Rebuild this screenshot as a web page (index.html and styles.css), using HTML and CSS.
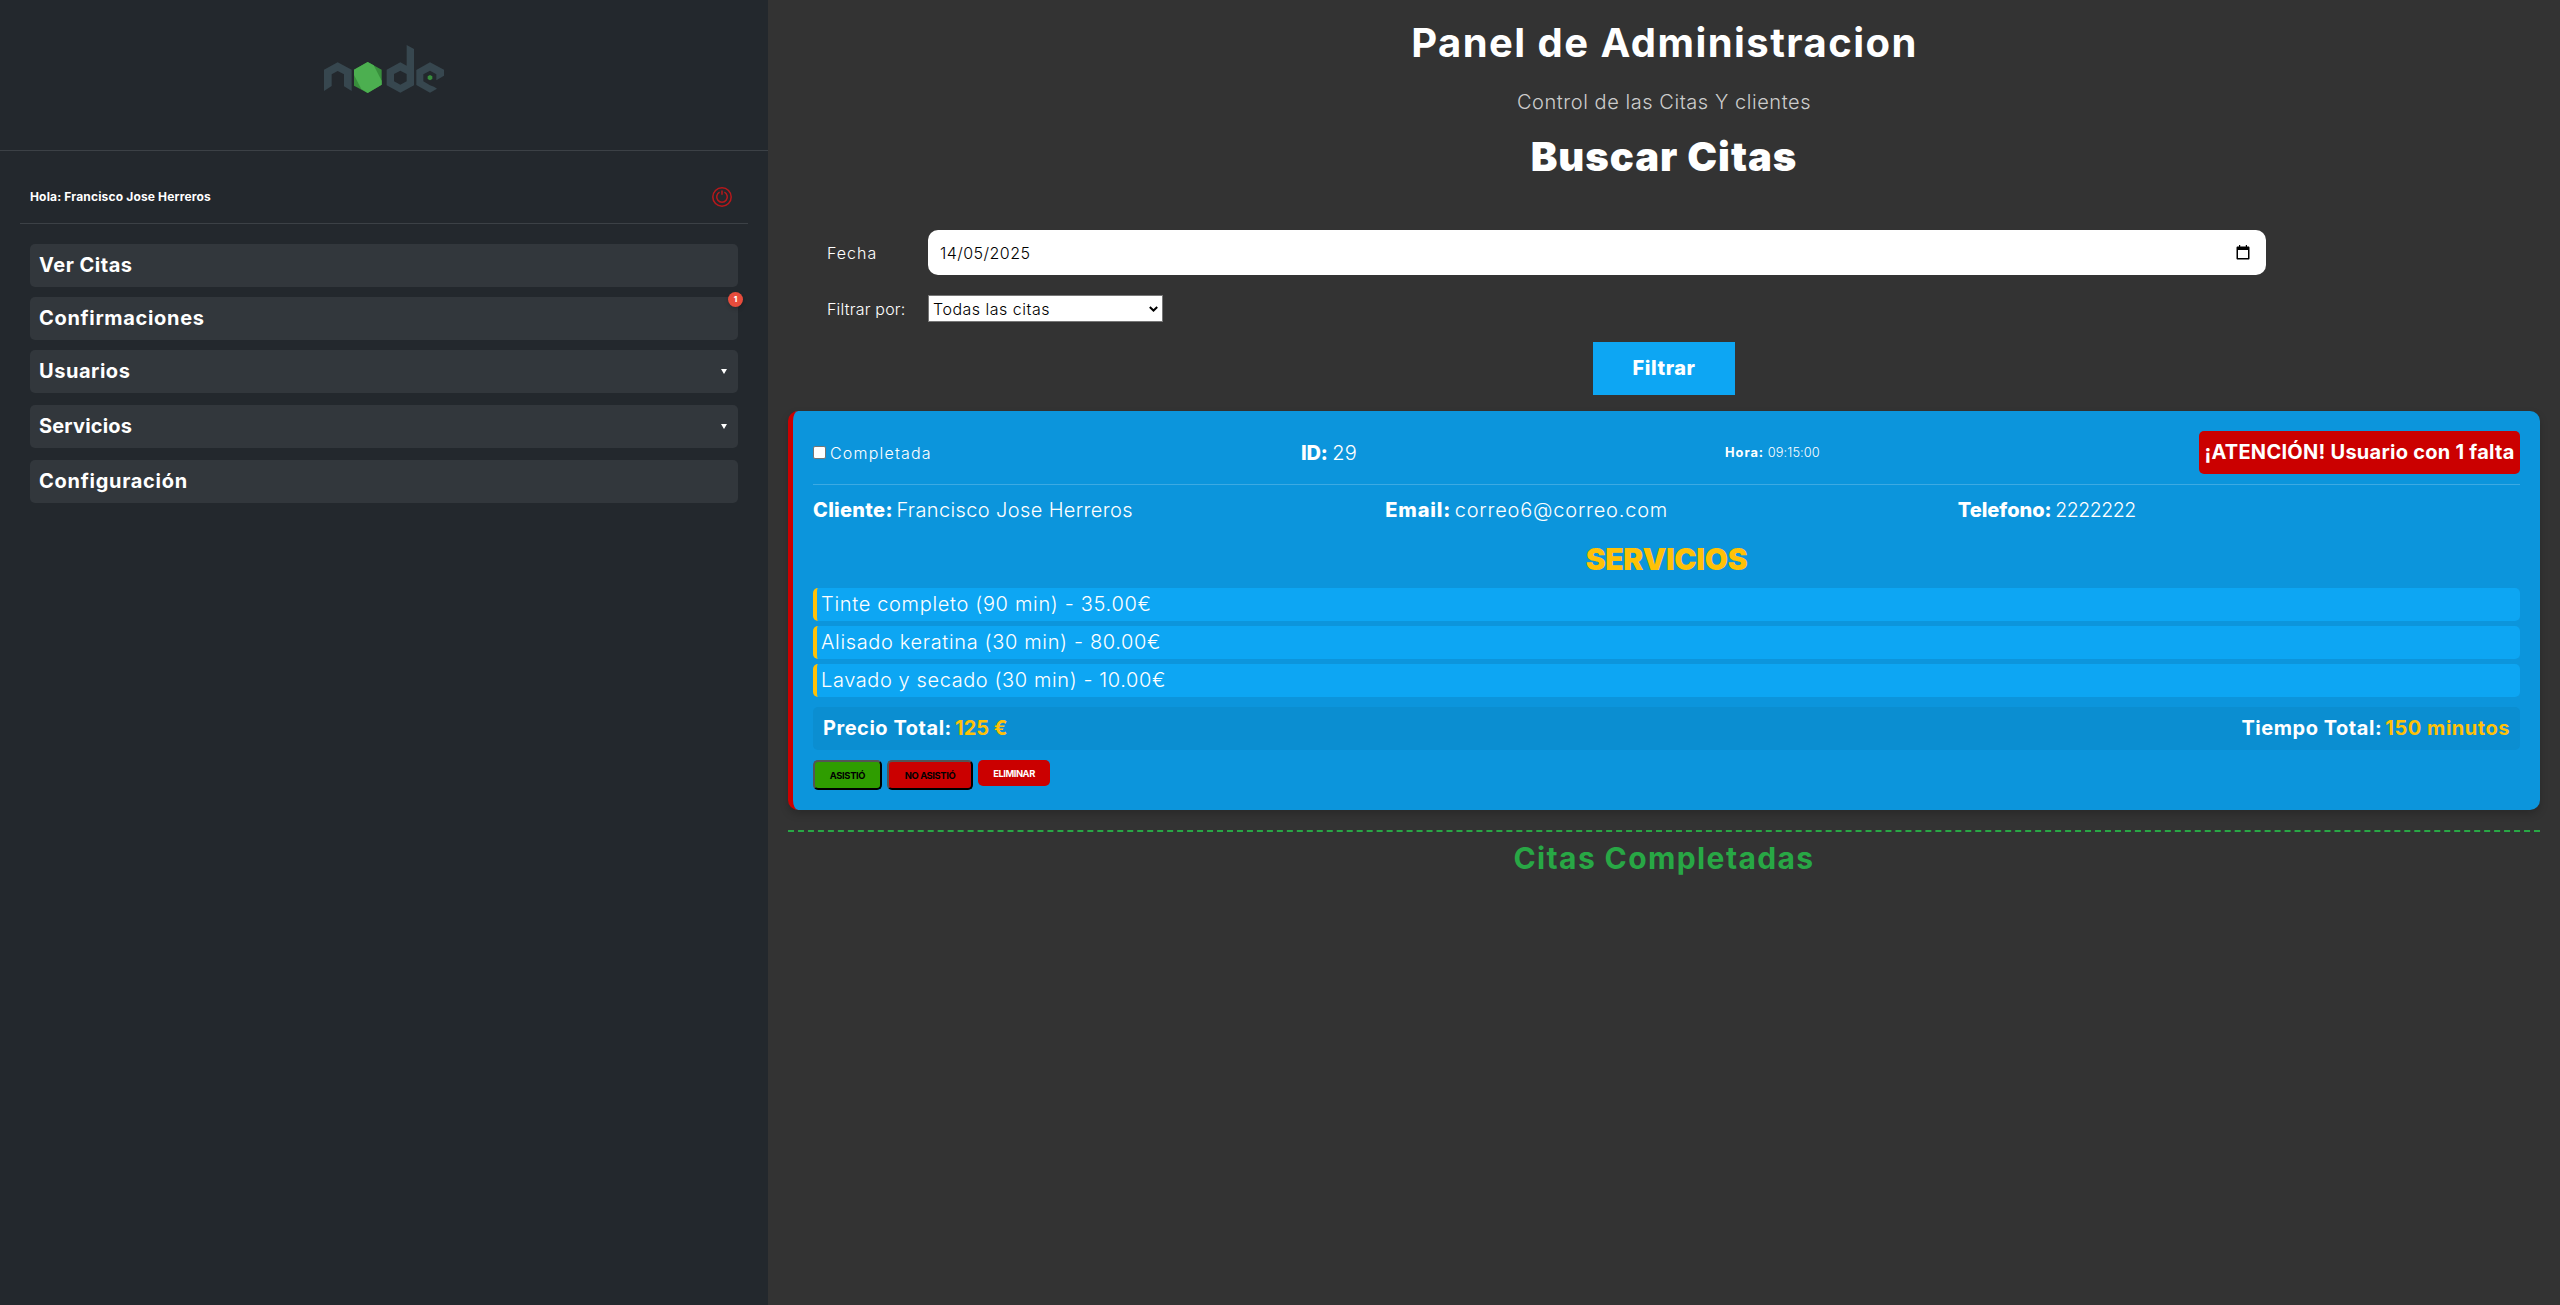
FILE: index.html
```html
<!DOCTYPE html>
<html lang="es">
<head>
<meta charset="utf-8">
<title>Panel de Administracion</title>
<link rel="stylesheet" href="styles.css">
</head>
<body>
<div class="layout">
  <aside class="sidebar">
    <header class="brand">
      <svg class="logo" viewBox="0 0 360 144" width="120" height="48" aria-label="node">
        <g fill="#37474f">
          <path d="M0 74 41 52 83 74V138L60 124V88L41 78 23 88V123L0 138Z"/>
          <path fill-rule="evenodd" d="M248 0 270 12V121L229 143 188 121V74L229 52 248 62ZM229 77 210 87V109L229 119 248 109V87Z"/>
          <path d="M318 52 360 74V92L337 106V88L318 77 298 88V109L318 121 330 125 339 131 318 143 277 120V75Z"/>
        </g>
        <path fill="#388e3c" d="M131 51 173 74V119L131 144 90 122V74Z"/>
        <path fill="#4caf50" d="M131 51 149 61 173 107V119L131 144 112 132 90 90V74Z"/>
        <path fill="#388e3c" d="M318 90 325 94V102L318 106 311 102V94Z"/>
      </svg>
    </header>
    <div class="user-bar">
      <p class="greeting">Hola: Francisco Jose Herreros</p>
      <svg class="power" viewBox="0 0 20 20" width="20" height="20" fill="none" stroke="#b8181b">
        <circle cx="10" cy="10" r="9.2" stroke-width="1.5"/>
        <path d="M7.6 5.2a5.3 5.3 0 1 0 4.8 0M10 3.4V7.8" stroke-width="1.5"/>
      </svg>
    </div>
    <nav class="menu">
      <a class="item"><span class="t-ver">Ver Citas</span></a>
      <a class="item"><span class="t-conf">Confirmaciones</span><b class="badge">1</b></a>
      <a class="item parent"><span class="t-usu">Usuarios</span><i class="caret"></i></a>
      <a class="item parent"><span class="t-serv">Servicios</span><i class="caret"></i></a>
      <a class="item"><span class="t-config">Configuración</span></a>
    </nav>
  </aside>
  <main class="main">
    <h1 class="page-title">Panel de Administracion</h1>
    <p class="page-sub">Control de las Citas Y clientes</p>
    <h2 class="search-title">Buscar Citas</h2>
    <form class="search">
      <div class="field date-field">
        <label class="label t-fecha">Fecha</label>
        <div class="date-input"><span class="t-date">14/05/2025</span>
          <svg viewBox="0 0 14 15" width="14" height="15"><path fill-rule="evenodd" d="M3 0h1.2v1.4h5.6V0H11v1.4h1.3c.7 0 1.2.5 1.2 1.2v10.8c0 .7-.5 1.1-1.2 1.1H1.700c-.7 0-1.200-.4-1.200-1.100V2.600c0-.7.5-1.200 1.200-1.200H3ZM2 5v8h10V5Z"/></svg>
        </div>
      </div>
      <div class="field">
        <label class="label t-filtrar">Filtrar por:</label>
        <div class="select"><span class="t-todas">Todas las citas</span>
          <svg viewBox="0 0 9 6" width="9" height="6" fill="none" stroke="#000" stroke-width="2"><path d="M.8 1 4.500 4.500 8.200 1"/></svg>
        </div>
      </div>
      <button class="submit" type="button">Filtrar</button>
    </form>
    <section class="card">
      <div class="card-head">
        <label class="check"><i class="box"></i><span class="t-comp">Completada</span></label>
        <p class="id"><b>ID:</b> <span class="t-29">29</span></p>
        <p class="hour"><b>Hora:</b> <span class="t-time">09:15:00</span></p>
        <p class="alert">¡ATENCIÓN! Usuario con 1 falta</p>
      </div>
      <div class="client">
        <p><b class="t-cli">Cliente:</b> <span class="t-name">Francisco Jose Herreros</span></p>
        <p><b class="t-email">Email:</b> <span class="t-mail">correo6@correo.com</span></p>
        <p><b class="t-tel">Telefono:</b> <span class="t-num">2222222</span></p>
      </div>
      <h3 class="services-title">SERVICIOS</h3>
      <ul class="services">
        <li class="t-s1">Tinte completo (90 min) - 35.00€</li>
        <li class="t-s2">Alisado keratina (30 min) - 80.00€</li>
        <li class="t-s3">Lavado y secado (30 min) - 10.00€</li>
      </ul>
      <div class="totals">
        <p>Precio Total: <span class="t-price">125 €</span></p>
        <p>Tiempo Total: <span class="t-mins">150 minutos</span></p>
      </div>
      <div class="actions">
        <button class="btn yes" type="button">ASISTIÓ</button>
        <button class="btn no" type="button">NO ASISTIÓ</button>
        <button class="btn del" type="button">ELIMINAR</button>
      </div>
    </section>
    <h3 class="done-title">Citas Completadas</h3>
  </main>
</div>
</body>
</html>
```
FILE: styles.css
```css
* { box-sizing: border-box; margin: 0; padding: 0; }
body { background: #333; color: #fff; font-family: Inter, sans-serif; font-size: 20px; font-weight: 300; white-space: nowrap; }
b { font-weight: 800; }
button { font-family: inherit; }
.layout { display: grid; grid-template-columns: 768px 1fr; height: 1305px; }

/* Sidebar */
.sidebar { background: #23282d; }
.brand { height: 151px; border-bottom: 1px solid #3c4146; display: flex; justify-content: center; padding-top: 45px; }
.logo { display: block; }
.user-bar { margin: 20px 20px 0; height: 53px; padding: 0 16px 0 10px; border-bottom: 1px solid #3c4146; display: flex; align-items: center; justify-content: space-between; }
.greeting { padding-bottom: 2px; font-size: 12px; font-weight: 700; letter-spacing: .16px; }
.menu { display: flex; flex-direction: column; gap: 10px; padding: 20px 30px; }
.item { position: relative; height: 43px; padding: 0 11px 0 9px; border-radius: 5px; background: #32373c; display: flex; align-items: center; justify-content: space-between; font-weight: 700; line-height: 42px; }
.item > span { padding-bottom: 1px; }
.parent { margin-bottom: 2px; }
.caret { border: 3.500px solid transparent; border-top: 5px solid #fff; border-bottom: 0; }
.badge { position: absolute; top: -5px; right: -5px; width: 15px; height: 15px; border-radius: 50%; background: #e74c3c; box-shadow: 0 2px 4px rgba(0, 0, 0, .2); font-size: 8px; line-height: 15px; text-align: center; }
.t-ver { letter-spacing: .5px; }
.t-conf { letter-spacing: .67px; }
.t-usu { letter-spacing: .54px; }
.t-serv { letter-spacing: .17px; }
.t-config { letter-spacing: .72px; }

/* Headings */
.main { padding: 13px 20px 0; }
.page-title, .search-title { font-size: 40px; line-height: 59px; padding-bottom: 1px; text-align: center; }
.page-title { padding-left: 1px; font-weight: 700; letter-spacing: 1.45px; }
.page-sub { margin: 11px 0 7px; line-height: 36px; text-align: center; color: #ccc; letter-spacing: .56px; }
.search-title { font-weight: 900; letter-spacing: .95px; }

/* Search form */
.search { margin-top: 43px; display: flex; flex-direction: column; gap: 20px; }
.field { display: flex; align-items: center; height: 27px; padding-left: 39px; font-size: 16px; font-weight: 300; }
.date-field { height: 45px; }
.label { width: 101px; }
.date-input { width: 1338px; height: 45px; padding: 0 16px 0 12px; border-radius: 10px; background: #fff; color: #000; display: flex; align-items: center; justify-content: space-between; }
.select { width: 235px; height: 27px; padding: 0 4px; border: 1px solid #767676; background: #fff; color: #000; display: flex; align-items: center; justify-content: space-between; }
.t-fecha { letter-spacing: 1px; }
.t-filtrar { letter-spacing: .2px; }
.t-date { letter-spacing: .45px; }
.t-todas { letter-spacing: .5px; }
.submit { align-self: center; width: 142px; height: 53px; padding-bottom: 1px; border: 0; background: #0da6f3; color: #fff; font-size: 20px; font-weight: 800; letter-spacing: .52px; }

/* Appointment card */
.card { margin-top: 16px; height: 399px; padding: 20px; border-left: 5px solid #cb0000; border-radius: 10px; background: #0c95dc; box-shadow: 0 4px 8px rgba(0, 0, 0, .2); }
.card-head { height: 54px; padding-bottom: 10px; border-bottom: 1px solid #3daae3; display: grid; grid-template-columns: 488px 424px 1fr auto; align-items: center; }
.check { display: flex; align-items: center; gap: 4px; font-size: 16px; }
.box { width: 13px; height: 13px; border: 1px solid #767676; border-radius: 2px; background: #fff; }
.t-comp { letter-spacing: 1.2px; }
.id b { letter-spacing: -.2px; }
.t-29 { margin-left: -1px; letter-spacing: .3px; }
.hour { font-size: 12.8px; }
.hour b { font-weight: 700; letter-spacing: 1px; }
.t-time { letter-spacing: .09px; }
.alert { width: 321px; height: 43px; border-radius: 5px; background: #cb0000; text-align: center; font-weight: 700; line-height: 42px; letter-spacing: .26px; }
.client { display: grid; grid-template-columns: repeat(3, 1fr); gap: 10px; margin-top: 8px; line-height: 35px; padding-bottom: 1px; }
.client span { margin-left: -2px; }
.t-cli { letter-spacing: .29px; }
.t-name { letter-spacing: .38px; }
.t-email { letter-spacing: .8px; }
.t-mail { letter-spacing: .8px; }
.t-tel { letter-spacing: 0; }
.t-num { font-size: 19.5px; letter-spacing: -.47px; }
.services-title { margin-top: 3px; font-size: 30px; font-weight: 900; line-height: 54px; letter-spacing: -.34px; text-align: center; color: #ffc107; }
.services { margin-top: 2px; list-style: none; display: flex; flex-direction: column; gap: 5px; }
.services li { height: 33px; padding-left: 4px; border-left: 4px solid #ffc107; border-radius: 5px; background: #0da6f3; line-height: 32px; }
.t-s1 { letter-spacing: .67px; }
.t-s2 { letter-spacing: .65px; }
.t-s3 { letter-spacing: .6px; }
.totals { margin-top: 10px; height: 43px; padding: 0 10px; border-radius: 5px; background: #0b8ed1; display: flex; justify-content: space-between; line-height: 42px; font-weight: 700; letter-spacing: .53px; }
.totals span { margin-left: -2px; color: #ffc107; }
.totals .t-price { letter-spacing: 0; }
.actions { margin-top: 10px; display: flex; align-items: flex-start; gap: 5px; }
.btn { height: 30px; border: 2px outset #000; border-radius: 5px; font-size: 9.4px; font-weight: 700; color: #000; }
.yes { width: 69px; background: #2f9d00; letter-spacing: -.35px; }
.no { width: 86px; background: #cb0000; letter-spacing: -.4px; }
.del { width: 72px; height: 26px; border: 0; background: #cb0000; color: #fff; font-weight: 700; letter-spacing: -.45px; }
.done-title { margin-top: 20px; padding-top: 3px; border-top: 2px dashed #28a745; font-size: 30px; font-weight: 700; line-height: 46px; letter-spacing: 1.4px; text-align: center; color: #28a745; }
```
